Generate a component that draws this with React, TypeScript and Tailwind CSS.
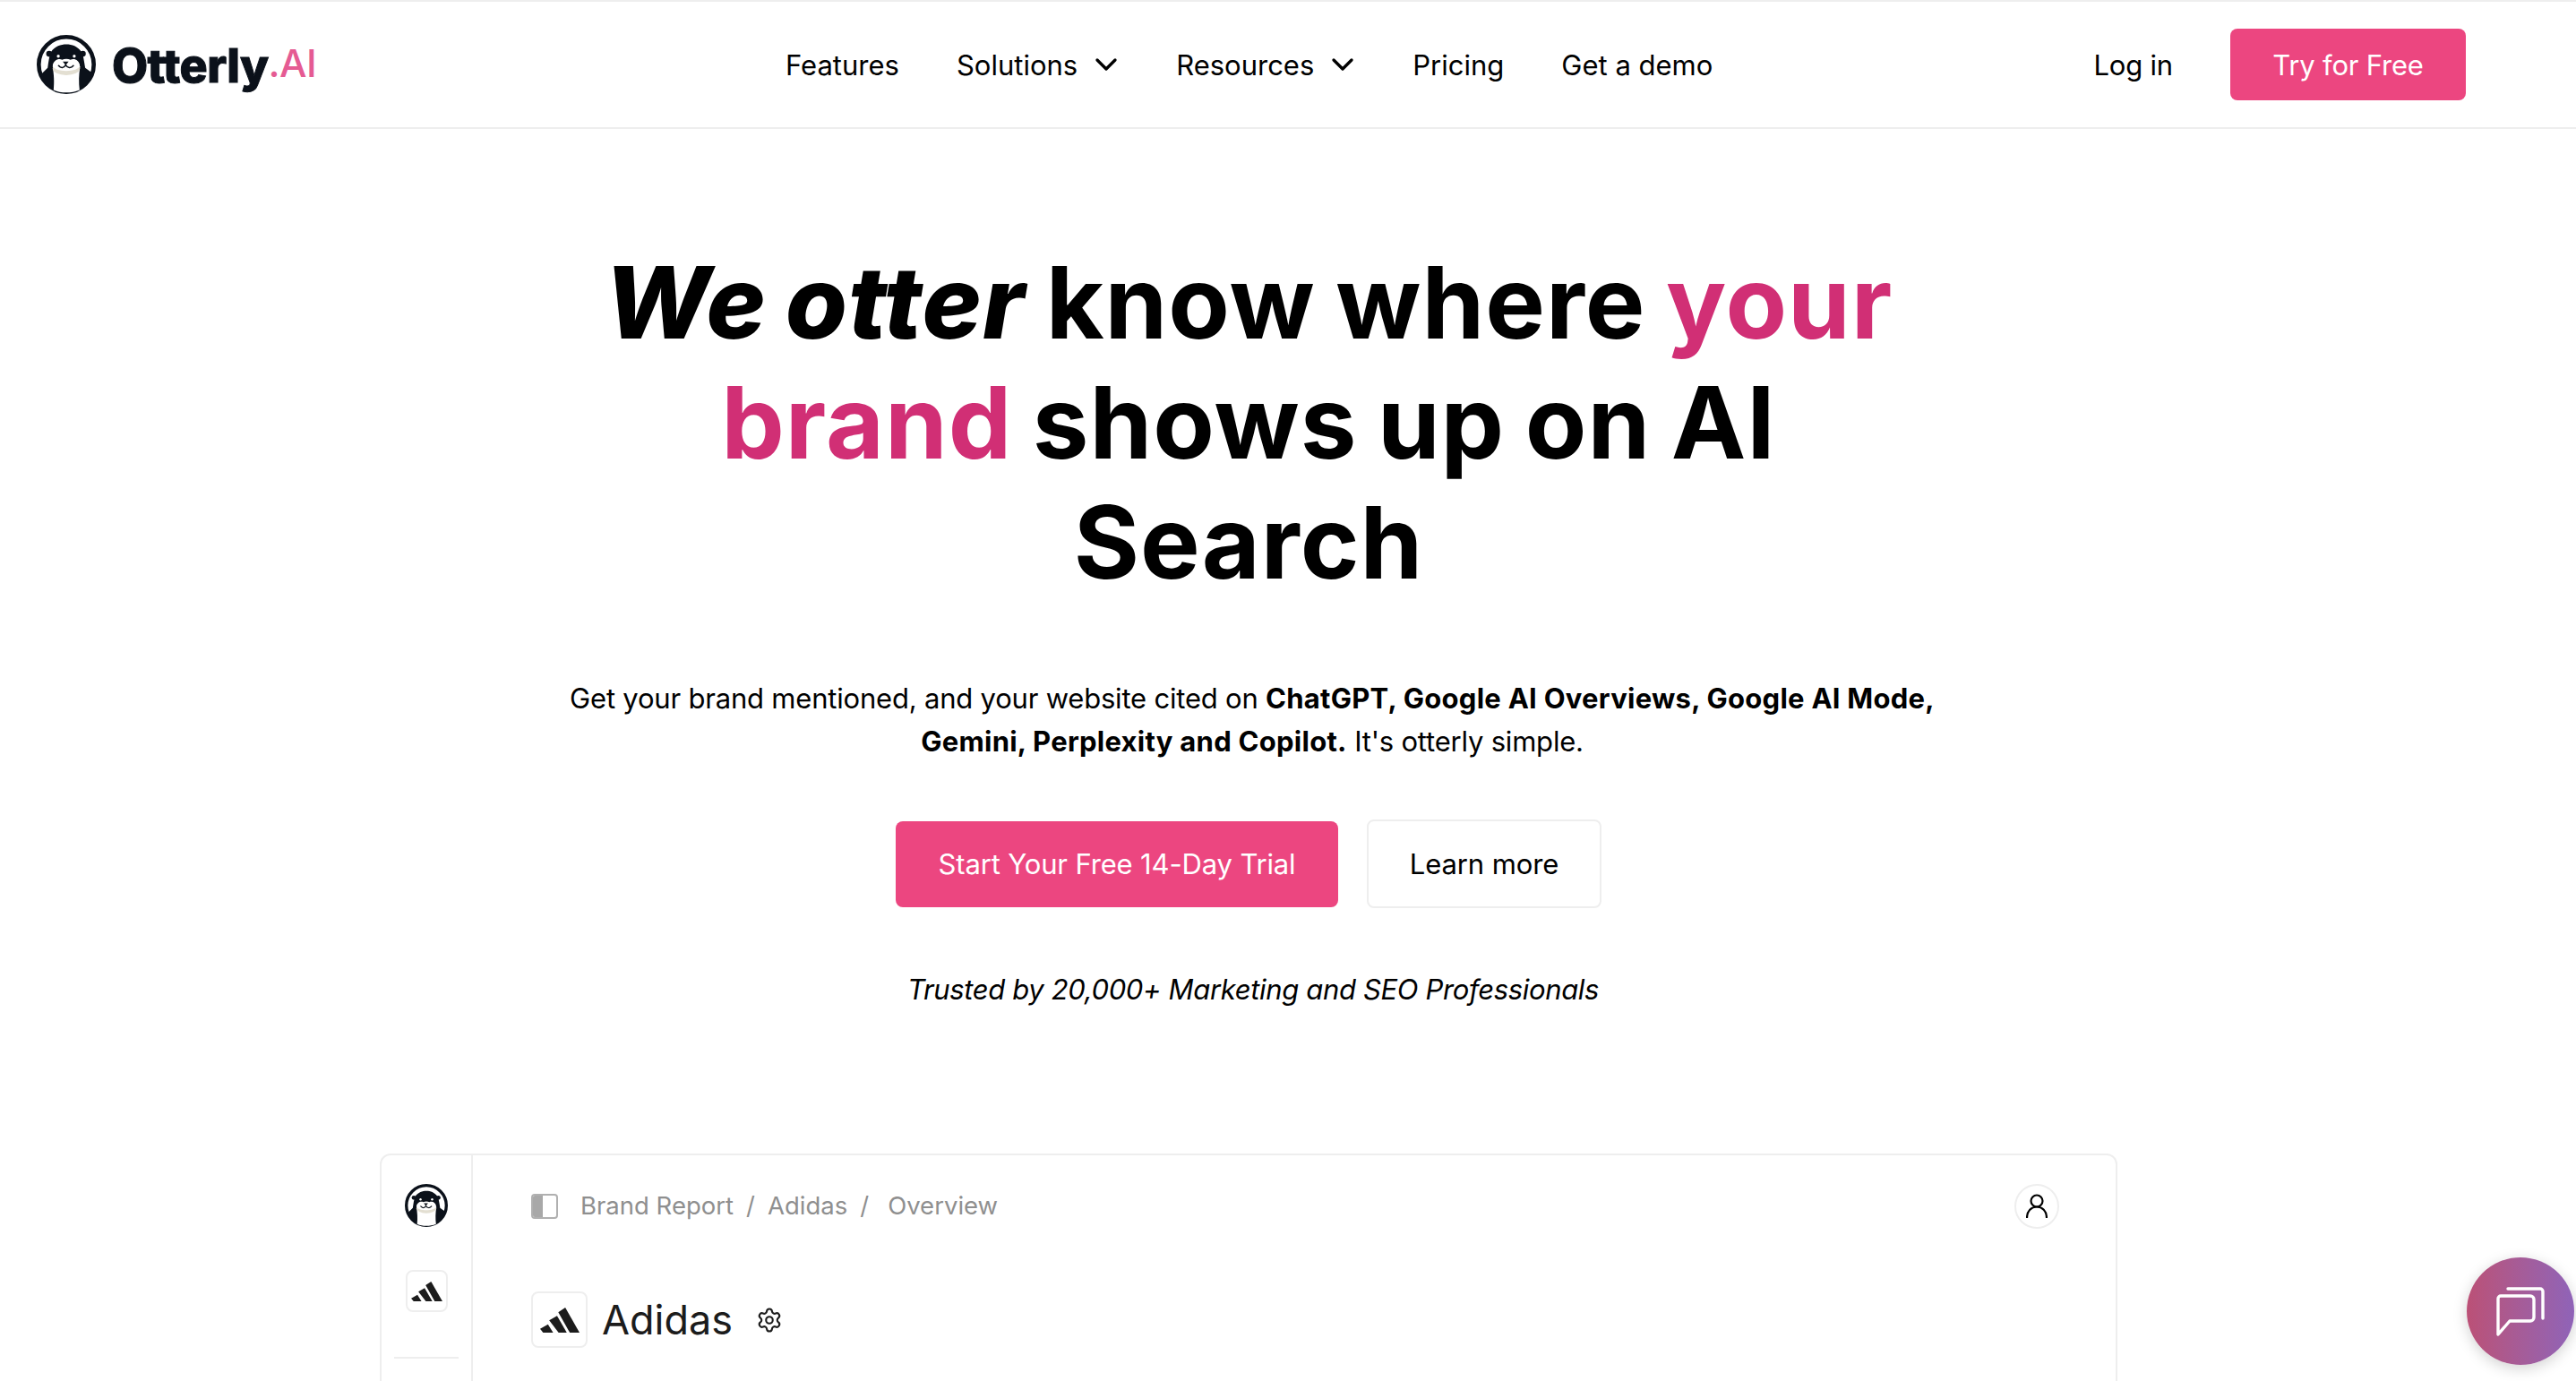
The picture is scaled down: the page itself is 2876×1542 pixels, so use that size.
import React from 'react';
import { ChevronDown, Settings } from 'lucide-react';

const OtterLogo: React.FC<{ className?: string }> = ({ className }) => (
  <svg viewBox="18 14 200 200" className={className}>
    <circle cx="118" cy="114" r="93" fill="#fff" stroke="#0b111a" strokeWidth="14" />
    <path d="M66 72C80 52 100 46 118 46C138 46 155 52 170 72C176 84 178 100 182 125L205 142A93 93 0 0 1 32 148L55 125C58 105 60 85 66 72Z" fill="#0b111a" />
    <circle cx="60" cy="78" r="10" fill="#0b111a" />
    <circle cx="174" cy="78" r="10" fill="#0b111a" />
    <path d="M75 200C78 170 76 150 72 120L165 120C160 150 160 175 163 200C135 212 100 212 75 200Z" fill="#fff" />
    <ellipse cx="118" cy="128" rx="46" ry="22" fill="#e3dfd2" />
    <path d="M72 118C74 100 92 92 104 98C112 94 124 94 132 98C146 92 162 100 164 118C162 130 140 136 118 136C96 136 74 130 72 118Z" fill="#fff" />
    <circle cx="91" cy="86" r="5" fill="#fff" />
    <circle cx="145" cy="86" r="5" fill="#fff" />
    <path d="M106 104H126L116 116Z" fill="#0b111a" />
    <path d="M92 118C100 128 110 126 116 116C122 126 134 128 142 118" fill="none" stroke="#0b111a" strokeWidth="5" strokeLinecap="round" />
  </svg>
);

const AdidasMark: React.FC<{ className?: string }> = ({ className }) => (
  <svg viewBox="52 70 130 82" className={className} fill="#1c1c1c">
    <path d="M52 140L78 125L95 152H62Z" />
    <path d="M82 112L108 97L140 152H113Z" />
    <path d="M112 85L135 70L182 152H150Z" />
  </svg>
);

const NavLink: React.FC<{ label: string; caret?: boolean }> = ({ label, caret }) => (
  <a className="flex items-center gap-[12px] text-[31px] leading-[48px] text-black">
    <span className="pt-[2px]">{label}</span>
    {caret && <ChevronDown className="w-[40px] h-[40px] -mr-[6px]" strokeWidth={2} />}
  </a>
);

export default function App() {
  return (
    <div className="h-[1542px] w-full overflow-hidden bg-white font-['Inter',sans-serif] text-black relative">
      <div className="w-[2788px]">
        <header className="w-[2876px] h-[144px] border-y-2 border-[#eeeeee] flex items-center justify-between pl-[41px] pr-[123px]">
          <div className="flex items-center w-[836px]">
            <OtterLogo className="w-[66px] h-[66px]" />
            <span className="ml-[18px] mt-[4px] text-[52px] leading-[60px] font-extrabold tracking-[-0.6px] text-[#0b111a] [-webkit-text-stroke:1px_#0b111a]">Otterly</span>
            <span className="text-[43px] leading-[60px] font-medium tracking-[-0.5px] text-[#e55b93] -mt-[4px]">.AI</span>
          </div>
          <nav className="flex flex-1 items-center gap-[64px]">
            <NavLink label="Features" />
            <NavLink label="Solutions" caret />
            <NavLink label="Resources" caret />
            <NavLink label="Pricing" />
            <NavLink label="Get a demo" />
          </nav>
          <div className="flex items-center gap-[64px]">
            <a className="text-[31px] leading-[48px] pt-[2px] tracking-[-0.2px]">Log in</a>
            <a className="w-[263px] h-[80px] rounded-[8px] bg-[#ec4680] text-white text-[31px] tracking-[-0.2px] pt-[2px] flex items-center justify-center">Try for Free</a>
          </div>
        </header>

        <main className="flex flex-col items-center">
          <h1 className="mt-[126px] w-[1500px] text-center text-[112px] leading-[134px] font-bold tracking-[1px] [word-spacing:-5px]">
            <em className="font-extrabold">We otter</em> know where <span className="text-[#d12f75]">your</span> <span className="text-[#d12f75]">brand</span> shows up on AI Search
          </h1>
          <p className="mt-[84px] ml-[8px] w-[1600px] text-center text-[31px] leading-[48px] tracking-[-0.2px]">
            Get your brand mentioned, and your website cited on <strong className="font-bold tracking-[0.26px]">ChatGPT, Google AI Overviews, Google AI Mode,</strong> <strong className="font-bold tracking-[0.26px]">Gemini, Perplexity and Copilot.</strong> It's otterly simple.
          </p>
          <div className="mt-[63px] flex items-center gap-[32px]">
            <a className="w-[494px] h-[96px] rounded-[8px] bg-[#ec4680] text-white text-[31px] tracking-[-0.15px] pt-[2px] flex items-center justify-center">Start Your Free 14-Day Trial</a>
            <a className="w-[262px] h-[99px] rounded-[8px] border-2 border-[#eeeeee] text-[31px] tracking-[-0.1px] pt-[2px] flex items-center justify-center">Learn more</a>
          </div>
          <p className="mt-[67px] ml-[10px] text-[31px] leading-[48px] italic tracking-[-0.35px]">Trusted by 20,000+ Marketing and SEO Professionals</p>

          <section className="mt-[159px] w-[1940px] h-[400px] border-2 border-[#eeeeee] rounded-[12px] flex">
            <aside className="w-[102px] border-r-2 border-[#eeeeee] flex flex-col items-center pt-[32px]">
              <OtterLogo className="w-[48px] h-[48px]" />
              <div className="mt-[48px] w-[47px] h-[47px] rounded-[8px] border-2 border-[#eeeeee] flex items-center justify-center">
                <AdidasMark className="w-[35px] h-[22px]" />
              </div>
              <div className="mt-[50px] w-[72px] h-[2px] bg-[#eeeeee]" />
            </aside>
            <div className="flex-1 pl-[65px] pr-[63px] pt-[32px]">
              <div className="flex items-center h-[50px] justify-between">
                <div className="flex items-center text-[27.5px] text-[#8f8f8f]">
                  <span className="w-[30px] h-[28px] rounded-[4px] border-2 border-[#b0b0b0] flex overflow-hidden mr-[25px]">
                    <span className="w-[11px] bg-[#a8a8a8]" />
                  </span>
                  <span>Brand Report</span>
                  <span className="mx-[14px]">/</span>
                  <span>Adidas</span>
                  <span className="ml-[14px] mr-[21px]">/</span>
                  <span>Overview</span>
                </div>
                <div className="w-[50px] h-[50px] rounded-full border-2 border-[#eeeeee] flex items-center justify-center">
                  <svg viewBox="0 0 24 28" className="w-[24px] h-[28px]" fill="none" stroke="#000" strokeWidth="2.2">
                    <circle cx="12" cy="8" r="6.5" />
                    <path d="M1 27C1 19 6 14.5 12 14.5C18 14.5 23 19 23 27" />
                  </svg>
                </div>
              </div>
              <div className="mt-[70px] flex items-center">
                <div className="w-[63px] h-[63px] rounded-[8px] border-2 border-[#eeeeee] flex items-center justify-center">
                  <AdidasMark className="w-[44px] h-[28px]" />
                </div>
                <span className="ml-[16px] text-[45px] leading-[63px] text-[#1c1c1c]">Adidas</span>
                <Settings className="ml-[26px] w-[30px] h-[30px] text-[#1c1c1c]" strokeWidth={1.7} />
              </div>
            </div>
          </section>
        </main>
      </div>

      <button className="absolute left-[2754px] top-[1404px] w-[120px] h-[120px] rounded-full bg-gradient-to-r from-[#bb5076] to-[#8f63b8] shadow-[0_4px_16px_rgba(0,0,0,0.18)] flex items-center justify-center">
        <svg viewBox="0 0 60 60" className="w-[60px] h-[60px]" fill="none" stroke="#fff" strokeWidth="3.4" strokeLinecap="round" strokeLinejoin="round">
          <path d="M16 5h36a3 3 0 0 1 3 3v30" />
          <path d="M8 13h33a4 4 0 0 1 4 4v20a4 4 0 0 1-4 4H18L5 56V16a3 3 0 0 1 3-3z" />
        </svg>
      </button>
    </div>
  );
}
